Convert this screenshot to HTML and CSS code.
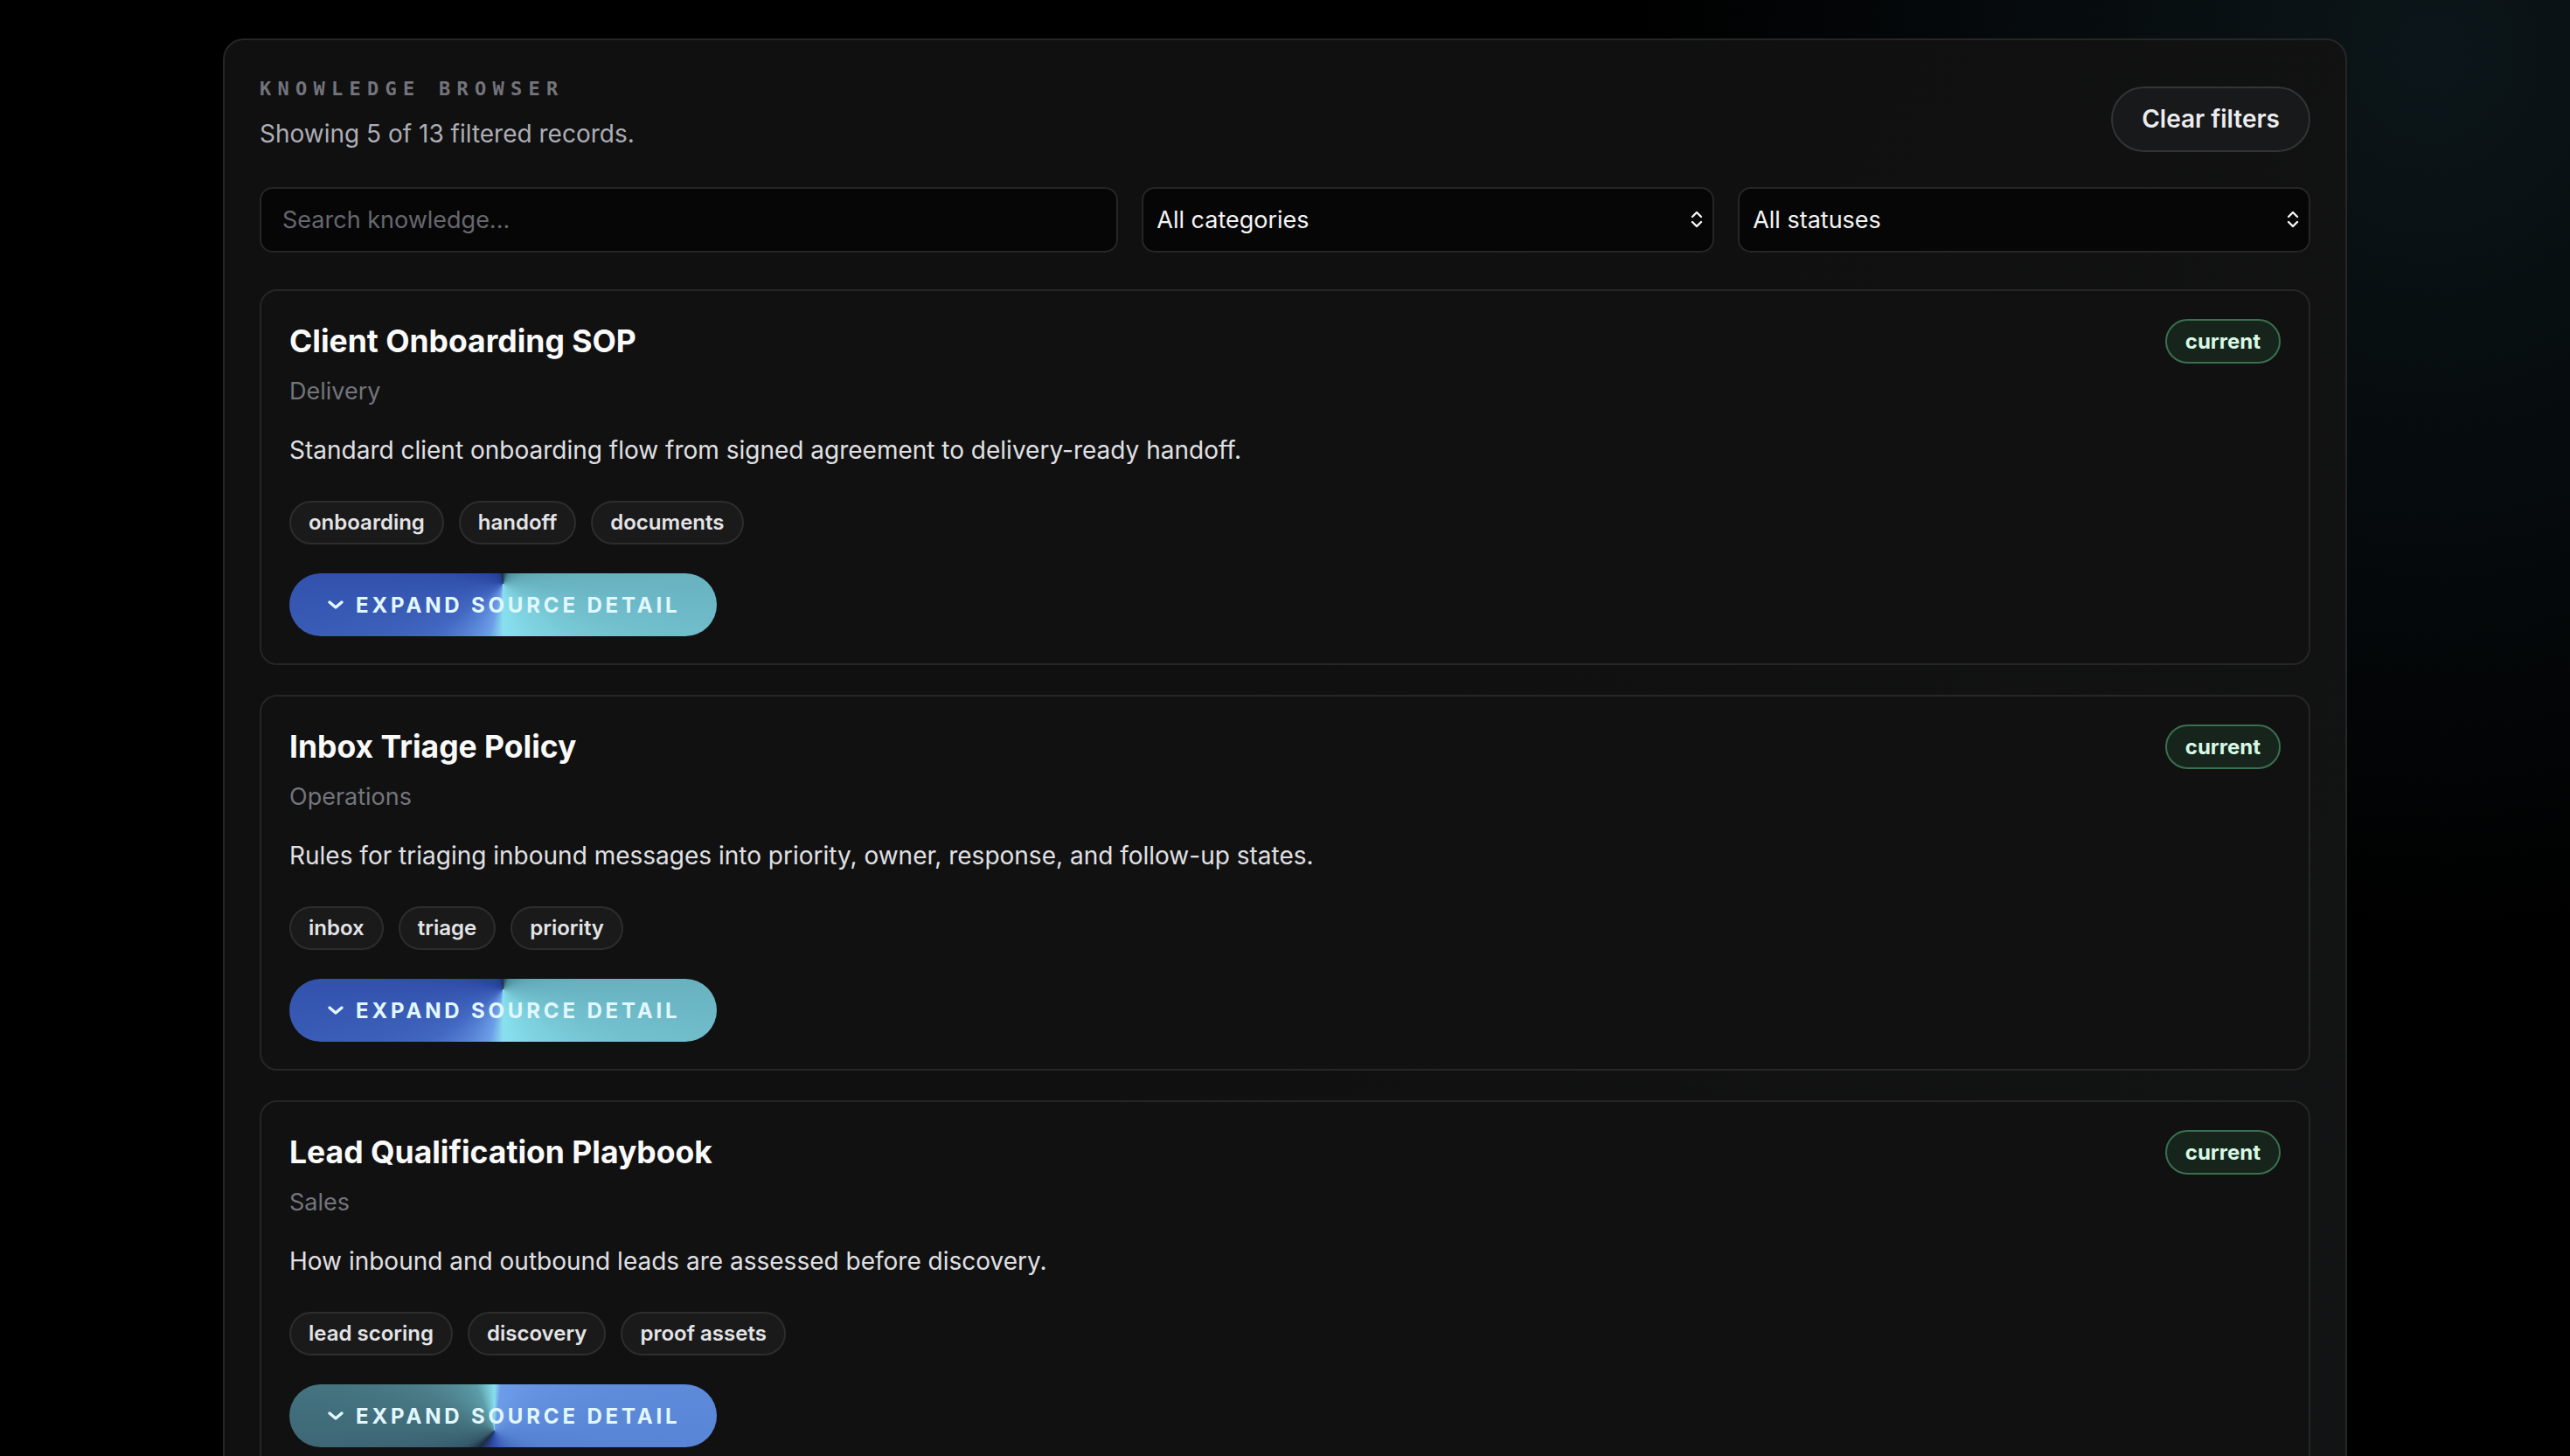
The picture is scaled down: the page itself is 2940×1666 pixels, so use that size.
FILE: index.html
```html
<!DOCTYPE html>
<html lang="en">
<head>
  <meta charset="UTF-8">
  <title>Knowledge Browser</title>
  <link rel="stylesheet" href="styles.css">
</head>
<body>

  <main class="browser">
    <header class="browser-head">
      <div>
        <p class="eyebrow">Knowledge Browser</p>
        <p class="summary">Showing 5 of 13 filtered records.</p>
      </div>
      <button class="clear-btn" type="button">Clear filters</button>
    </header>

    <div class="filters">
      <input class="field" type="text" placeholder="Search knowledge...">
      <div class="select-wrap">
        <select class="field">
          <option>All categories</option>
          <option>Delivery</option>
          <option>Operations</option>
          <option>Sales</option>
        </select>
        <svg class="select-icon" viewBox="0 0 16 22" fill="none" stroke="currentColor" stroke-width="2.4" stroke-linecap="round" stroke-linejoin="round"><path d="M3 8l5-5 5 5"/><path d="M3 14l5 5 5-5"/></svg>
      </div>
      <div class="select-wrap">
        <select class="field">
          <option>All statuses</option>
          <option>current</option>
          <option>draft</option>
          <option>archived</option>
        </select>
        <svg class="select-icon" viewBox="0 0 16 22" fill="none" stroke="currentColor" stroke-width="2.4" stroke-linecap="round" stroke-linejoin="round"><path d="M3 8l5-5 5 5"/><path d="M3 14l5 5 5-5"/></svg>
      </div>
    </div>

    <section class="records">

      <article class="record">
        <div class="record-head">
          <h3>Client Onboarding SOP</h3>
          <span class="status">current</span>
        </div>
        <p class="category">Delivery</p>
        <p class="desc">Standard client onboarding flow from signed agreement to delivery-ready handoff.</p>
        <div class="tags">
          <span class="tag">onboarding</span>
          <span class="tag">handoff</span>
          <span class="tag">documents</span>
        </div>
        <button class="expand-btn" type="button">
          <svg viewBox="0 0 20 12" fill="none" stroke="currentColor" stroke-width="3.4" stroke-linecap="round" stroke-linejoin="round"><path d="M3 3l7 6 7-6"/></svg>
          Expand source detail
        </button>
      </article>

      <article class="record">
        <div class="record-head">
          <h3>Inbox Triage Policy</h3>
          <span class="status">current</span>
        </div>
        <p class="category">Operations</p>
        <p class="desc">Rules for triaging inbound messages into priority, owner, response, and follow-up states.</p>
        <div class="tags">
          <span class="tag">inbox</span>
          <span class="tag">triage</span>
          <span class="tag">priority</span>
        </div>
        <button class="expand-btn" type="button">
          <svg viewBox="0 0 20 12" fill="none" stroke="currentColor" stroke-width="3.4" stroke-linecap="round" stroke-linejoin="round"><path d="M3 3l7 6 7-6"/></svg>
          Expand source detail
        </button>
      </article>

      <article class="record">
        <div class="record-head">
          <h3>Lead Qualification Playbook</h3>
          <span class="status">current</span>
        </div>
        <p class="category">Sales</p>
        <p class="desc">How inbound and outbound leads are assessed before discovery.</p>
        <div class="tags">
          <span class="tag">lead scoring</span>
          <span class="tag">discovery</span>
          <span class="tag">proof assets</span>
        </div>
        <button class="expand-btn alt" type="button">
          <svg viewBox="0 0 20 12" fill="none" stroke="currentColor" stroke-width="3.4" stroke-linecap="round" stroke-linejoin="round"><path d="M3 3l7 6 7-6"/></svg>
          Expand source detail
        </button>
      </article>

      <article class="record">
        <div class="record-head">
          <h3>Weekly Reporting Template</h3>
          <span class="status">current</span>
        </div>
        <p class="category">Operations</p>
        <p class="desc">Structure for weekly client status reports, metrics, and next steps.</p>
        <div class="tags">
          <span class="tag">reporting</span>
          <span class="tag">metrics</span>
        </div>
        <button class="expand-btn" type="button">
          <svg viewBox="0 0 20 12" fill="none" stroke="currentColor" stroke-width="3.4" stroke-linecap="round" stroke-linejoin="round"><path d="M3 3l7 6 7-6"/></svg>
          Expand source detail
        </button>
      </article>

      <article class="record">
        <div class="record-head">
          <h3>Proposal Review Checklist</h3>
          <span class="status">current</span>
        </div>
        <p class="category">Sales</p>
        <p class="desc">Checks to run on every proposal before it goes out to a prospect.</p>
        <div class="tags">
          <span class="tag">proposals</span>
          <span class="tag">review</span>
        </div>
        <button class="expand-btn alt" type="button">
          <svg viewBox="0 0 20 12" fill="none" stroke="currentColor" stroke-width="3.4" stroke-linecap="round" stroke-linejoin="round"><path d="M3 3l7 6 7-6"/></svg>
          Expand source detail
        </button>
      </article>

    </section>
  </main>

</body>
</html>
```

FILE: styles.css
```css
* {
  box-sizing: border-box;
}

body {
  margin: 0;
  padding: 44px 0;
  font-family: Inter, 'Noto Sans', sans-serif;
  background-color: #000;
  background-image: radial-gradient(ellipse 900px 1000px at 2780px 60px, rgba(26, 48, 56, 0.45), rgba(0, 0, 0, 0) 100%);
  background-repeat: no-repeat;
  min-height: 100vh;
  color: #f4f4f5;
}

p, h3 {
  margin: 0;
}

.browser {
  max-width: 2430px;
  margin: 0 auto;
  padding: 43px 40px 40px;
  background: linear-gradient(120deg, #101010 40%, #131415 100%);
  border: 2px solid #262626;
  border-radius: 24px;
}

.browser-head {
  display: flex;
  justify-content: space-between;
  align-items: flex-end;
}

.eyebrow {
  font-family: 'DejaVu Sans Mono', 'Liberation Mono', monospace;
  font-weight: 700;
  font-size: 22px;
  line-height: 26px;
  letter-spacing: 0.33em;
  text-transform: uppercase;
  color: #74747c;
}

.summary {
  margin-top: 17px;
  font-size: 28px;
  line-height: 42px;
  color: #adadb5;
}

.clear-btn {
  font-family: inherit;
  font-size: 28px;
  font-weight: 600;
  line-height: 35px;
  padding: 18px 33px;
  color: #ececee;
  background-color: #18191a;
  border: 2px solid #333436;
  border-radius: 999px;
  cursor: pointer;
}

.filters {
  display: grid;
  grid-template-columns: 1.5fr 1fr 1fr;
  gap: 27px;
  margin-top: 40px;
}

.field {
  width: 100%;
  height: 75px;
  font-family: inherit;
  font-size: 27px;
  color: #f4f4f5;
  background-color: #060606;
  border: 2px solid #262626;
  border-radius: 15px;
  outline: none;
}

input.field {
  padding: 0 24px;
}

input.field::placeholder {
  color: #67676e;
}

.select-wrap {
  position: relative;
}

select.field {
  appearance: none;
  -webkit-appearance: none;
  padding: 0 40px 0 15px;
}

.select-icon {
  position: absolute;
  right: 12px;
  top: 26px;
  width: 16px;
  height: 22px;
  color: #f4f4f5;
  pointer-events: none;
}

.records {
  display: flex;
  flex-direction: column;
  gap: 34px;
  margin-top: 42px;
}

.record {
  padding: 32px 32px 31px;
  background-color: #111;
  border: 2px solid #262626;
  border-radius: 20px;
}

.record-head {
  display: flex;
  justify-content: space-between;
  align-items: flex-start;
}

.record h3 {
  font-size: 35.5px;
  font-weight: 700;
  line-height: 51px;
  color: #fafafa;
}

.status {
  font-size: 24px;
  font-weight: 700;
  line-height: 35px;
  padding: 6px 21px;
  color: #d6f8e4;
  background-color: #16241c;
  border: 2px solid #3a6f50;
  border-radius: 999px;
}

.category {
  margin-top: 12px;
  font-size: 27px;
  line-height: 40px;
  color: #74747c;
}

.desc {
  margin-top: 26px;
  font-size: 28px;
  line-height: 42px;
  color: #e0e0e4;
}

.tags {
  display: flex;
  gap: 17px;
  margin-top: 37px;
}

.tag {
  font-size: 24px;
  font-weight: 600;
  line-height: 32px;
  padding: 7px 20px;
  color: #e4e4e7;
  background-color: #1a1a1a;
  border: 2px solid #2d2d2d;
  border-radius: 999px;
}

.expand-btn {
  display: flex;
  align-items: center;
  gap: 13px;
  height: 72px;
  margin-top: 33px;
  padding: 0 42px 0 43px;
  font-family: inherit;
  font-size: 24px;
  font-weight: 700;
  letter-spacing: 0.16em;
  text-transform: uppercase;
  color: #e2f8ff;
  border: none;
  border-radius: 999px;
  cursor: pointer;
  background: conic-gradient(from 195deg at 50% 17%,
    #6d9de8 0deg, #4268c2 40deg, #2b48a3 95deg, #24408f 140deg,
    #1c2f52 162deg, #2f5a6c 175deg, #4a8a98 195deg, #62a8b6 235deg,
    #7ccfdd 300deg, #88e0ee 345deg, #6d9de8 360deg);
}

.expand-btn.alt {
  background: conic-gradient(from 8deg at 48% 74%,
    #6d9de8 0deg, #6592e0 40deg, #5481d2 100deg, #3d62bc 150deg,
    #2a46a0 185deg, #1c2e42 215deg, #35596a 235deg,
    #4a7c88 290deg, #5c9ca8 330deg, #88e0ee 352deg, #6d9de8 360deg);
}

.expand-btn svg {
  width: 20px;
  height: 12px;
}
```
